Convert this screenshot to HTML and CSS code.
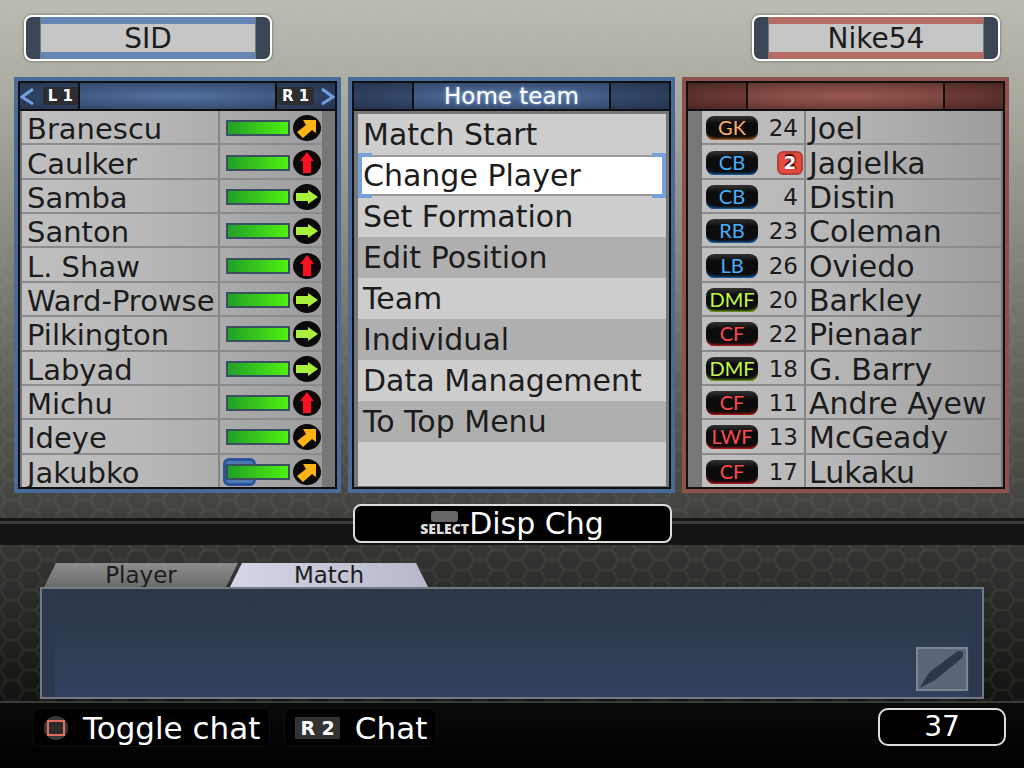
FILE: index.html
```
<!DOCTYPE html>
<html lang="en">
<head>
  <meta charset="UTF-8">
  <meta name="viewport" content="width=device-width, initial-scale=1.0">
  <title>Match Lobby</title>
  <link rel="stylesheet" href="styles.css">
</head>
<body>

  <!-- Condition arrow, reused by every row -->
  <svg class="defs" aria-hidden="true">
    <symbol id="arrow" viewBox="0 0 28 28">
      <ellipse cx="14" cy="14" rx="14" ry="13" fill="#0c0a08"/>
    </symbol>
    <symbol id="right" viewBox="0 0 28 28">
      <use href="#arrow"/>
      <path d="M3 10h12V7l10 7-10 7v-3H3z" fill="#a8f03c"/>
    </symbol>
    <symbol id="up" viewBox="0 0 28 28">
      <use href="#arrow"/>
      <path d="M14 3l7 9h-3v12h-8V12H7z" fill="#fa1020"/>
    </symbol>
    <symbol id="slant" viewBox="0 0 28 28">
      <use href="#arrow"/>
      <path d="M23 6v13l-4-3-9 8-6-6 9-7-3-5z" fill="#fcb414"/>
    </symbol>
  </svg>

  <!-- User names -->
  <header class="users">
    <div class="user home">SID</div>
    <div class="user away">Nike54</div>
  </header>

  <main class="panels">
    <!-- Home squad -->
    <section class="panel home">
      <div class="panel-header">
        <button class="corner" aria-label="Previous">
          <svg width="16" height="20" viewBox="0 0 16 20"><path d="M13 3L2 11l11 7" fill="none" stroke="#6f9fe0" stroke-width="3"/></svg>
          <span class="key">L 1</span>
        </button>
        <div class="title"></div>
        <button class="corner" aria-label="Next">
          <span class="key">R 1</span>
          <svg width="16" height="20" viewBox="0 0 16 20"><path d="M3 3l11 8-11 7" fill="none" stroke="#6f9fe0" stroke-width="3"/></svg>
        </button>
      </div>
      <div class="panel-body">
        <table class="squad">
          <tr><td class="name">Branescu</td><td class="status"><div class="condition"><div class="bar"></div><svg><use href="#slant"/></svg></div></td></tr>
          <tr><td class="name">Caulker</td><td class="status"><div class="condition"><div class="bar"></div><svg><use href="#up"/></svg></div></td></tr>
          <tr><td class="name">Samba</td><td class="status"><div class="condition"><div class="bar"></div><svg><use href="#right"/></svg></div></td></tr>
          <tr><td class="name">Santon</td><td class="status"><div class="condition"><div class="bar"></div><svg><use href="#right"/></svg></div></td></tr>
          <tr><td class="name">L. Shaw</td><td class="status"><div class="condition"><div class="bar"></div><svg><use href="#up"/></svg></div></td></tr>
          <tr><td class="name">Ward-Prowse</td><td class="status"><div class="condition"><div class="bar"></div><svg><use href="#right"/></svg></div></td></tr>
          <tr><td class="name">Pilkington</td><td class="status"><div class="condition"><div class="bar"></div><svg><use href="#right"/></svg></div></td></tr>
          <tr><td class="name">Labyad</td><td class="status"><div class="condition"><div class="bar"></div><svg><use href="#right"/></svg></div></td></tr>
          <tr><td class="name">Michu</td><td class="status"><div class="condition"><div class="bar"></div><svg><use href="#up"/></svg></div></td></tr>
          <tr><td class="name">Ideye</td><td class="status"><div class="condition"><div class="bar"></div><svg><use href="#slant"/></svg></div></td></tr>
          <tr><td class="name">Jakubko</td><td class="status"><div class="condition marked"><div class="bar"></div><svg><use href="#slant"/></svg></div></td></tr>
        </table>
      </div>
    </section>

    <!-- Menu -->
    <section class="panel home">
      <div class="panel-header">
        <div class="corner"></div>
        <h1 class="title">Home team</h1>
        <div class="corner"></div>
      </div>
      <nav class="menu">
        <button>Match Start</button>
        <button class="selected">Change Player</button>
        <button>Set Formation</button>
        <button class="dark">Edit Position</button>
        <button>Team</button>
        <button class="dark">Individual</button>
        <button>Data Management</button>
        <button class="dark">To Top Menu</button>
      </nav>
    </section>

    <!-- Away squad -->
    <section class="panel away">
      <div class="panel-header">
        <div class="corner"></div>
        <div class="title"></div>
        <div class="corner"></div>
      </div>
      <div class="panel-body">
        <table class="squad">
          <tr><td class="position"><span class="badge gk">GK</span></td><td class="number">24</td><td class="name">Joel</td></tr>
          <tr><td class="position"><span class="badge df">CB</span></td><td class="number"><span class="captain">2</span></td><td class="name">Jagielka</td></tr>
          <tr><td class="position"><span class="badge df">CB</span></td><td class="number">4</td><td class="name">Distin</td></tr>
          <tr><td class="position"><span class="badge df">RB</span></td><td class="number">23</td><td class="name">Coleman</td></tr>
          <tr><td class="position"><span class="badge df">LB</span></td><td class="number">26</td><td class="name">Oviedo</td></tr>
          <tr><td class="position"><span class="badge mf">DMF</span></td><td class="number">20</td><td class="name">Barkley</td></tr>
          <tr><td class="position"><span class="badge fw">CF</span></td><td class="number">22</td><td class="name">Pienaar</td></tr>
          <tr><td class="position"><span class="badge mf">DMF</span></td><td class="number">18</td><td class="name">G. Barry</td></tr>
          <tr><td class="position"><span class="badge fw">CF</span></td><td class="number">11</td><td class="name">Andre Ayew</td></tr>
          <tr><td class="position"><span class="badge fw">LWF</span></td><td class="number">13</td><td class="name">McGeady</td></tr>
          <tr><td class="position"><span class="badge fw">CF</span></td><td class="number">17</td><td class="name">Lukaku</td></tr>
        </table>
      </div>
    </section>
  </main>

  <div class="divider">
    <button class="display-change"><span class="select-key">SELECT</span>Disp Chg</button>
  </div>

  <!-- Chat -->
  <section class="chat">
    <div class="tabs">
      <button class="tab">Player</button>
      <button class="tab active">Match</button>
    </div>
    <div class="chat-box">
      <button class="write" aria-label="Write message">
        <svg width="48" height="40" viewBox="0 0 48 40"><path d="M2 39l5-9q2-4 6-8L37 4q4-3 6-2 4 2 1 7L21 28q-6 5-10 6z" fill="#2d3748"/></svg>
      </button>
    </div>
  </section>

  <footer class="footer">
    <button class="hint">
      <svg width="24" height="24" viewBox="0 0 24 24"><circle cx="12" cy="12" r="12" fill="#3a3c3c"/><rect x="4" y="5" width="16" height="14" fill="#2a2c2c" stroke="#e0705c" stroke-width="2"/></svg>
      Toggle chat
    </button>
    <button class="hint"><span class="key">R 2</span>Chat</button>
    <div class="timer">37</div>
  </footer>

</body>
</html>
```
FILE: styles.css
```
* {
  box-sizing: border-box;
}

body {
  margin: 0;
  min-height: 100vh;
  display: flex;
  flex-direction: column;
  font-family: "DejaVu Sans", sans-serif;
  font-size: 30px;
  line-height: 32px;
  color: #1c1c1c;
  background-color: #111;
  background-image:
    url("data:image/svg+xml,%3Csvg xmlns='http://www.w3.org/2000/svg' width='36' height='20'%3E%3Cpath d='M6 0h12l6 10-6 10H6L0 10zM24 10h12' fill='none' stroke='%23a0a090' stroke-opacity='.08' stroke-width='3'/%3E%3C/svg%3E"),
    linear-gradient(#bcbcb2 0, #a5a59b 120px, #85867e 250px, #5b5c55 400px, #42433e 510px, #333331 560px, #262624 620px, #121210 700px);
}

button {
  font: inherit;
  color: inherit;
  border: none;
  padding: 0;
  background: none;
  cursor: pointer;
}

.defs {
  position: absolute;
  width: 0;
  height: 0;
}

/* User names */
.users {
  display: flex;
  justify-content: space-between;
  padding: 15px 24px 16px;
}

.user {
  width: 248px;
  height: 46px;
  border: 2px solid #fff;
  border-radius: 8px;
  box-shadow: 0 0 3px rgba(0, 0, 0, 0.5);
  font-size: 28px;
  line-height: 44px;
  text-align: center;
}

.user.home {
  background: linear-gradient(#6585b4 7px, transparent 7px 35px, #6585b4 35px) 15px 0 / 214px 100% no-repeat,
    linear-gradient(90deg, #3b4654 14px, #777 14px 15px, #c6c6c6 15px 229px, #777 229px 230px, #3b4654 230px);
}

.user.away {
  background: linear-gradient(#b46c64 7px, transparent 7px 35px, #b46c64 35px) 15px 0 / 214px 100% no-repeat,
    linear-gradient(90deg, #3b4654 14px, #777 14px 15px, #c6c6c6 15px 229px, #777 229px 230px, #3b4654 230px);
}

/* Three panels */
.panels {
  display: grid;
  grid-template-columns: repeat(3, 1fr);
  gap: 7px;
  padding: 0 15px 0 14px;
}

.panel {
  display: flex;
  flex-direction: column;
  border: 4px solid #4a6b98;
  outline: 2px solid #101010;
  outline-offset: -6px;
  padding: 2px;
  background-color: #777;
}

.panel.away {
  border-color: #8e514b;
}

.panel-header {
  display: flex;
  height: 28px;
  border-bottom: 2px solid #101010;
  background: radial-gradient(ellipse at center, #52719f, #3c5379 60%, #2d3d5a);
}

.away .panel-header {
  background: radial-gradient(ellipse at center, #98584f, #7b453f 50%, #532d29);
}

.corner {
  flex: 0 0 58px;
  display: flex;
  align-items: center;
  justify-content: space-between;
  background-color: rgba(20, 30, 50, 0.3);
}

.away .corner {
  background-color: rgba(40, 10, 10, 0.2);
}

.title {
  flex: 1;
  margin: 0;
  border: solid #101010;
  border-width: 0 2px;
  font-size: 23px;
  font-weight: normal;
  line-height: 26px;
  text-align: center;
  color: #fff;
  text-shadow: 0 0 3px #a8c8ff;
}

.key {
  padding: 0 5px;
  background-color: #2c2d30;
  color: #fff;
  font-size: 15px;
  font-weight: bold;
  line-height: 18px;
  white-space: nowrap;
}

.panel-body {
  flex: 1;
  padding: 0 13px 0 2px;
}

.away .panel-body {
  padding: 0 2px 0 14px;
}

.squad {
  width: 100%;
  height: 376px;
  border-collapse: collapse;
  table-layout: fixed;
  font-size: 29px;
  background: linear-gradient(90deg, #bfbfbf, #b8b8b8 40%, #9c9c9c);
}

.squad td {
  padding: 2px 0 0;
  line-height: 30px;
  white-space: nowrap;
  border-bottom: 2px solid #8b8b8b;
}

.squad tr:last-child td {
  border-bottom: none;
}

.squad .name {
  padding: 4px 0 0 5px;
  line-height: 28px;
}

.squad td + td.name,
.squad .status {
  border-left: 2px solid #858585;
}

.status {
  width: 103px;
}

.condition {
  display: flex;
  align-items: center;
  gap: 3px;
  padding-left: 6px;
  position: relative;
}

.condition svg {
  width: 28px;
  height: 28px;
}

.bar {
  width: 64px;
  height: 16px;
  border: 2px solid #3a5060;
  background: linear-gradient(90deg, #20a028, #50f010);
  position: relative;
}

.marked::before {
  content: "";
  position: absolute;
  left: 3px;
  top: 0;
  width: 27px;
  height: 22px;
  border: 3px solid #2b549c;
  border-radius: 6px;
  background-color: #5078b0;
}

.position {
  width: 60px;
}

.number {
  width: 43px;
}

.squad .number {
  padding-right: 6px;
  font-size: 23px;
  text-align: right;
}

.away .squad .name {
  padding-left: 3px;
  font-size: 30px;
}

.badge {
  display: block;
  width: 52px;
  height: 24px;
  margin-left: 4px;
  border-radius: 8px;
  background: linear-gradient(#333, #0c0c0c 30%, #0c0c0c);
  font-family: Lato, sans-serif;
  font-size: 20px;
  line-height: 23px;
  text-align: center;
}

.gk {
  color: #ffb066;
  box-shadow: inset 0 -3px 3px -2px #e08030;
}

.df {
  color: #48b0ff;
  box-shadow: inset 0 -3px 3px -2px #2080e0;
}

.mf {
  color: #c8f848;
  box-shadow: inset 0 -3px 3px -2px #90d020;
}

.fw {
  color: #ff4a4a;
  box-shadow: inset 0 -3px 3px -2px #f02020;
}

.captain {
  display: block;
  width: 26px;
  margin-left: 15px;
  border: 2px solid #b0403a;
  border-radius: 6px;
  background-color: #e8483e;
  color: #fff;
  font-size: 18px;
  font-weight: bold;
  line-height: 20px;
  text-align: center;
  text-shadow: 0 -2px 1px #300, 1px 0 1px #300;
}

/* Menu */
.menu {
  flex: 1;
  display: flex;
  flex-direction: column;
  margin: 3px 3px 1px 4px;
  background-color: #cdcdcd;
}

.menu button {
  height: 41px;
  padding-left: 5px;
  text-align: left;
  position: relative;
}

.menu .dark {
  background-color: #afafaf;
}

.menu .selected {
  background-color: #fff;
  border: solid #999;
  border-width: 2px 0;
}

/* Cursor brackets round the selected item */
.selected::before,
.selected::after {
  content: "";
  position: absolute;
  top: -4px;
  bottom: -4px;
  width: 10px;
  border: 4px solid #76a0d8;
}

.selected::before {
  left: 0;
  border-right: none;
}

.selected::after {
  right: 0;
  border-left: none;
}

/* Dark strip under the panels */
.divider {
  display: flex;
  justify-content: center;
  padding: 11px 0 2px;
  background: linear-gradient(transparent 25px, #161614 25px 28px, #3b3b39 28px 31px, #141412 31px);
}

.display-change {
  display: flex;
  align-items: center;
  justify-content: center;
  width: 319px;
  height: 39px;
  border: 2px solid #ddd;
  border-radius: 8px;
  background-color: #000;
  color: #fff;
}

.select-key {
  display: flex;
  flex-direction: column;
  align-items: center;
  font-family: "Open Sans", sans-serif;
  font-size: 14px;
  font-weight: 800;
  line-height: 14px;
  color: #ddd;
}

.select-key::before {
  content: "";
  width: 27px;
  height: 11px;
  border-radius: 3px;
  background-color: #666;
}

/* Chat */
.chat {
  padding: 18px 40px 2px;
}

.tabs {
  display: flex;
  padding-left: 4px;
}

.tab {
  width: 194px;
  height: 24px;
  clip-path: polygon(12px 0, 100% 0, 182px 100%, 0 100%);
  background: linear-gradient(#8c8c8c, #6c6c6c);
  font-size: 23px;
  line-height: 24px;
}

.tab.active {
  width: 198px;
  margin-left: -8px;
  clip-path: polygon(12px 0, 186px 0, 100% 100%, 0 100%);
  background: linear-gradient(90deg, #d4d6e6, #b6b8c8);
}

.chat-box {
  display: flex;
  justify-content: flex-end;
  align-items: flex-end;
  min-height: 112px;
  padding: 0 14px 6px;
  border: 2px solid #747a84;
  background: linear-gradient(#2c3748, #2e3b4e 40%, #32415f);
  box-shadow: inset 13px 0 #2b384d, inset -13px 0 #2b384d;
}

.write {
  display: flex;
  border: 2px solid #7d8591;
  background-color: #5b6679;
}

/* Footer */
.footer {
  flex: 1;
  display: flex;
  align-items: flex-start;
  gap: 14px;
  padding: 5px 18px 20px 33px;
  border-top: 2px solid #3a3a3a;
  background: linear-gradient(#0a0a0a, #000);
  color: #fff;
}

.hint {
  display: flex;
  align-items: center;
  gap: 15px;
  height: 39px;
  padding: 0 9px 0 10px;
  border: 1px solid #101010;
  border-radius: 8px;
  background-color: #000;
  font-size: 31px;
}

.hint .key {
  font-size: 19px;
  line-height: 22px;
  background-color: #333;
}

.timer {
  width: 128px;
  height: 38px;
  margin-left: auto;
  border: 2px solid #ddd;
  border-radius: 10px;
  background-color: #000;
  font-size: 28px;
  line-height: 34px;
  text-align: center;
}
```
